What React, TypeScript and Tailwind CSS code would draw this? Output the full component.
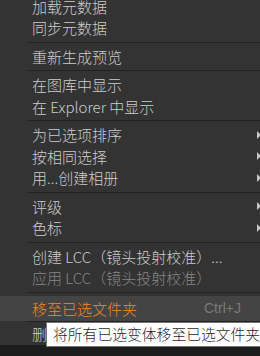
import React from 'react';

type Item =
  | { kind: 'sep' }
  | { kind: 'row'; label: string; sub?: boolean; disabled?: boolean };

const items: Item[] = [
  { kind: 'row', label: '加载元数据' },
  { kind: 'row', label: '同步元数据' },
  { kind: 'sep' },
  { kind: 'row', label: '重新生成预览' },
  { kind: 'sep' },
  { kind: 'row', label: '在图库中显示' },
  { kind: 'row', label: '在 Explorer 中显示' },
  { kind: 'sep' },
  { kind: 'row', label: '为已选项排序', sub: true },
  { kind: 'row', label: '按相同选择', sub: true },
  { kind: 'row', label: '用...创建相册', sub: true },
  { kind: 'sep' },
  { kind: 'row', label: '评级', sub: true },
  { kind: 'row', label: '色标', sub: true },
  { kind: 'sep' },
  { kind: 'row', label: '创建 LCC（镜头投射校准）...' },
  { kind: 'row', label: '应用 LCC（镜头投射校准）', disabled: true },
  { kind: 'sep' },
];

function SubArrow() {
  return (
    <svg width="4" height="8" viewBox="0 0 4 8" className="absolute left-[257px] top-1/2 -translate-y-1/2">
      <path d="M0 0 L4 4 L0 8 Z" fill="#c8c8c8" />
    </svg>
  );
}

export default function App() {
  return (
    <div
      className="w-[260px] h-[356px] overflow-hidden bg-[#1d1d1d] relative"
      style={{ fontFamily: '"Noto Sans CJK SC", "Noto Sans", sans-serif' }}
    >
      <div className="bg-[#333333] h-[345px] flex flex-col">
        <div className="-mt-[4.5px] flex flex-col">
          {items.map((it, i) =>
            it.kind === 'sep' ? (
              <div key={i} className="h-[7px] flex items-center pl-[27px]">
                <div className="h-px w-full bg-[#222222]" />
              </div>
            ) : (
              <div
                key={i}
                className={`h-[21.5px] relative flex items-center pl-[32px] text-[15px] font-light leading-none whitespace-nowrap ${
                  it.disabled ? 'text-[#858585]' : 'text-[#cccccc]'
                }`}
              >
                {it.label}
                {it.sub && <SubArrow />}
              </div>
            )
          )}
          {/* highlighted item */}
          <div className="h-[25px] bg-[#444444] flex items-center pl-[32px] text-[15px] font-light leading-none text-[#f28a1c] whitespace-nowrap relative">
            移至已选文件夹
            <span
              className="absolute left-[204px] text-[14px] text-[#7a7a7a]"
              style={{ fontFamily: '"Liberation Sans", sans-serif' }}
            >
              Ctrl+J
            </span>
          </div>
          <div className="h-[2px] flex items-center pl-[27px]">
            <div className="h-px w-full bg-[#222222]" />
          </div>
          <div className="h-[22px] flex items-center pl-[32px] text-[15px] font-light leading-none text-[#cccccc] whitespace-nowrap">
            删除
          </div>
        </div>
      </div>

      {/* tooltip */}
      <div className="absolute left-[46px] top-[322px] h-[25px] w-[240px] bg-white border border-[#767676] flex items-center pl-[6px] text-[14.8px] font-light leading-none text-[#1f1f2e] whitespace-nowrap">
        将所有已选变体移至已选文件夹
      </div>
    </div>
  );
}
